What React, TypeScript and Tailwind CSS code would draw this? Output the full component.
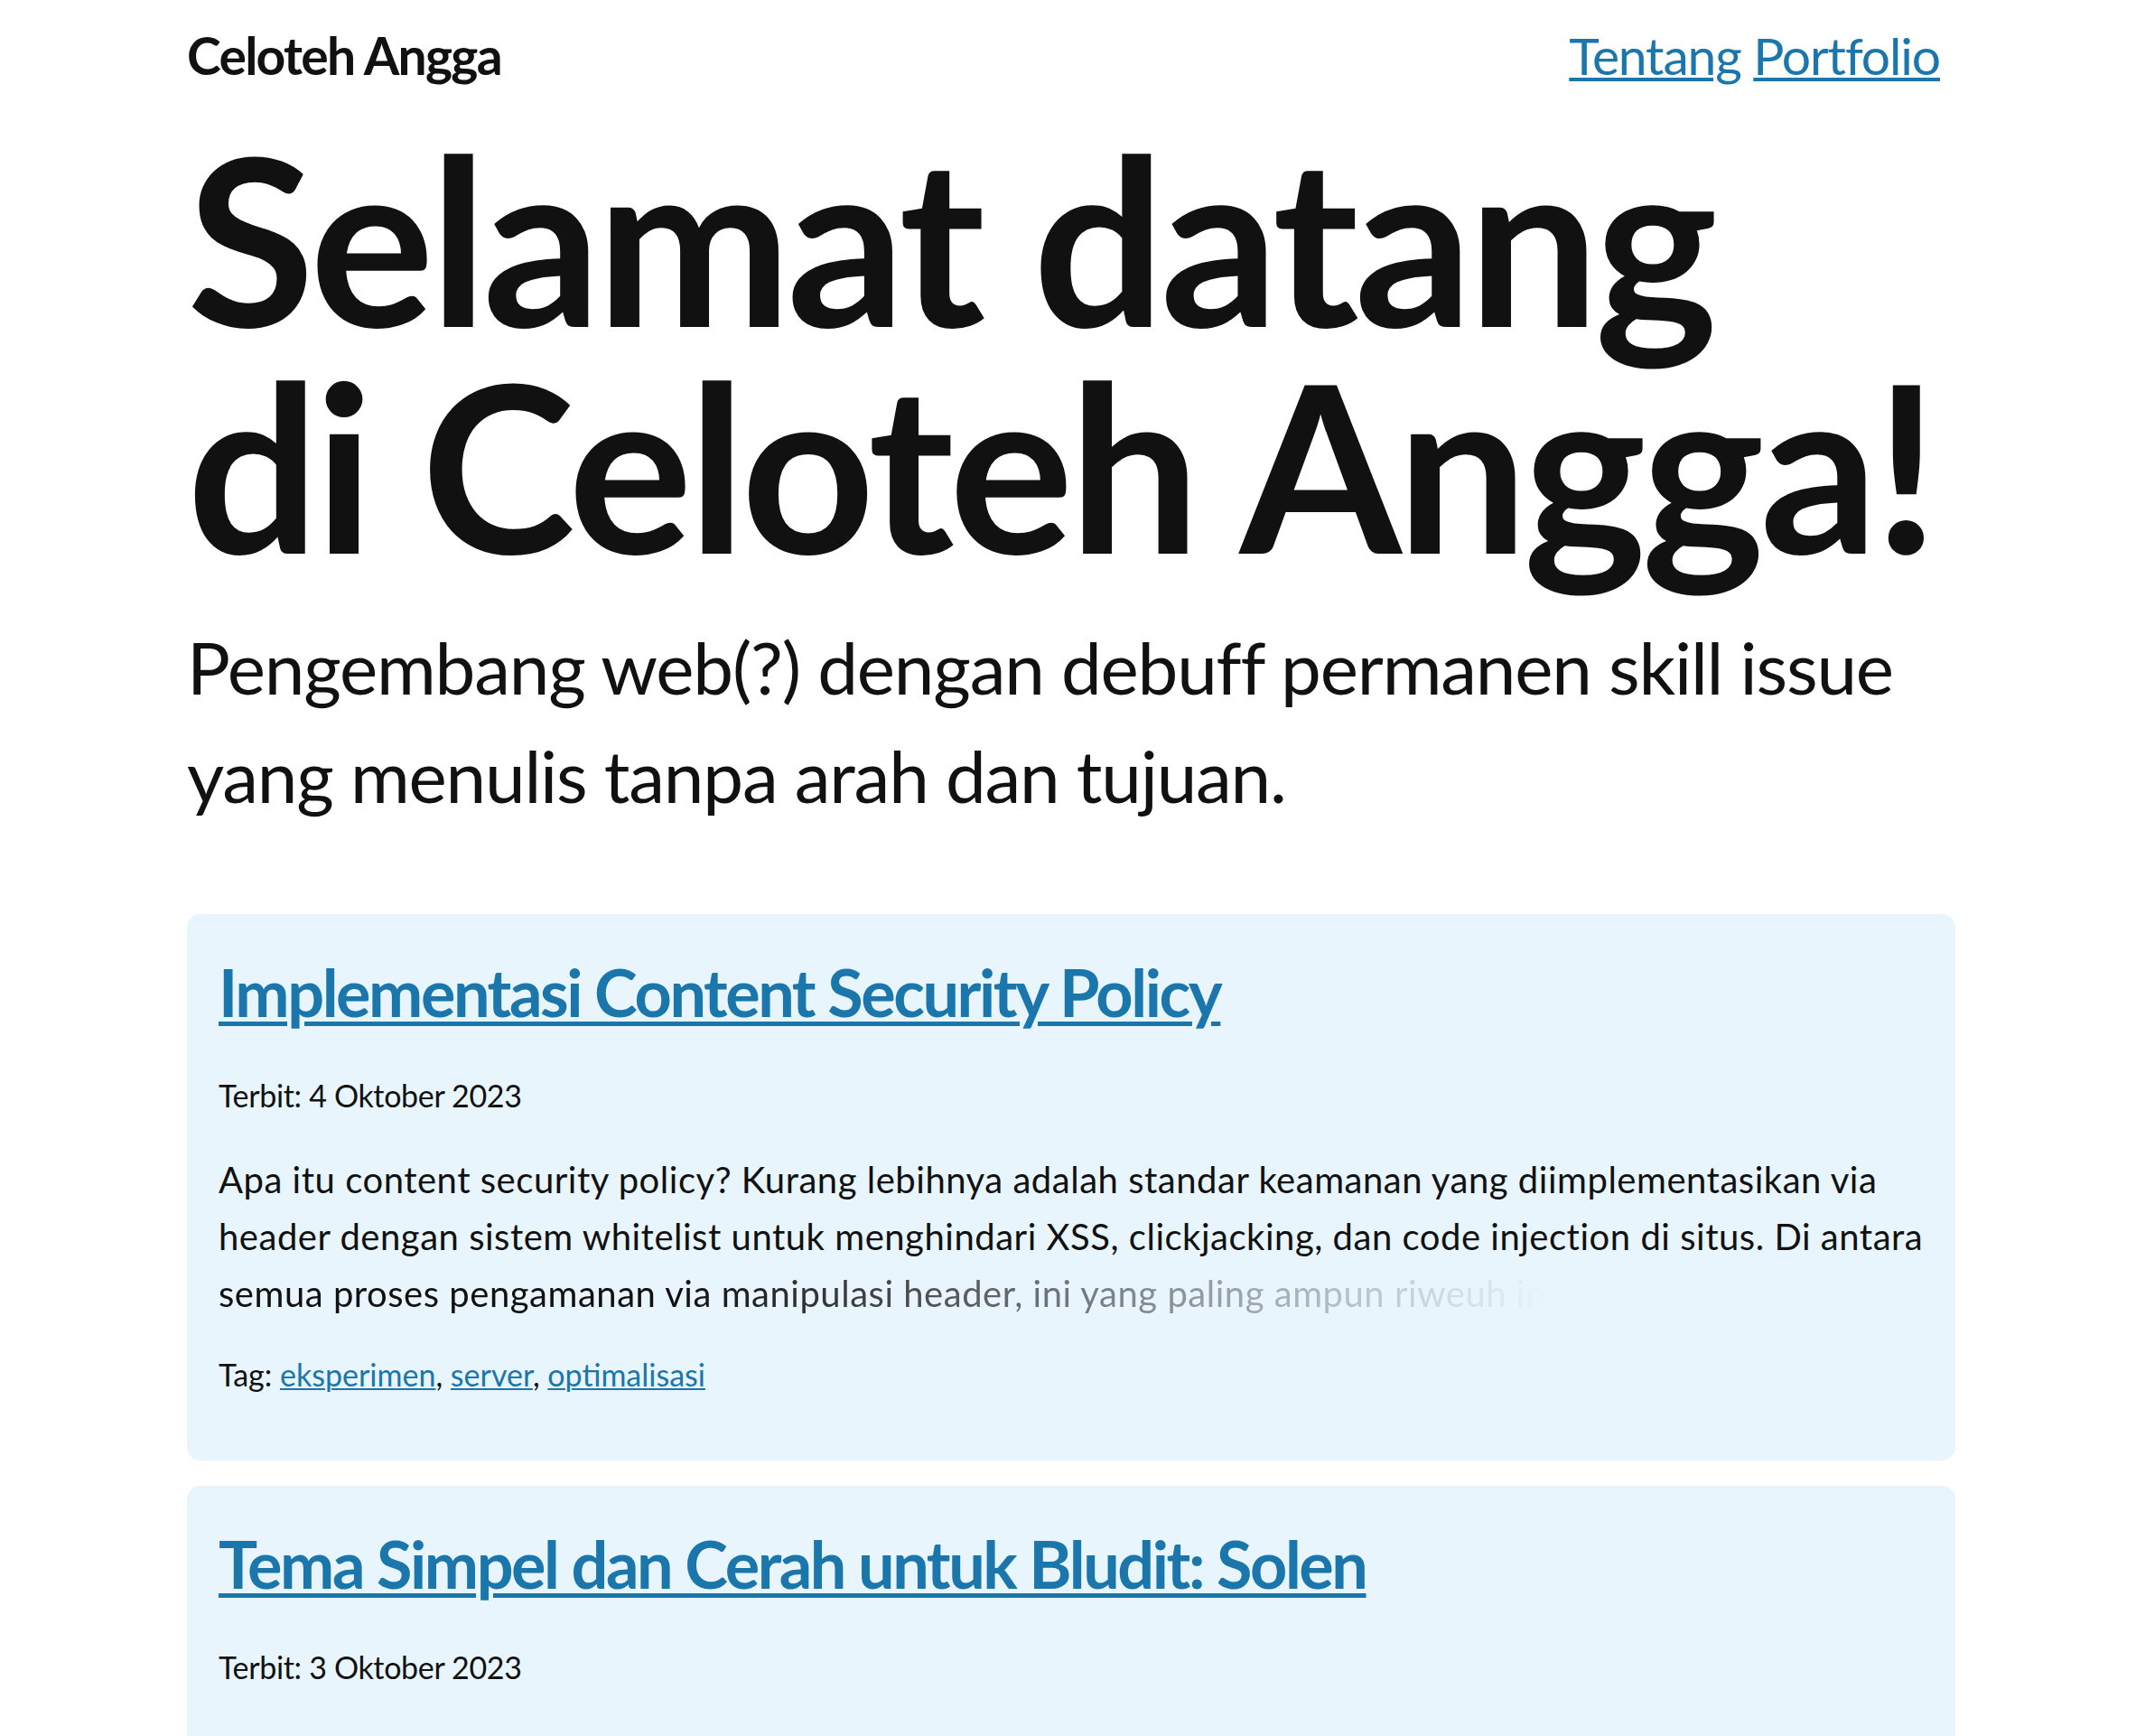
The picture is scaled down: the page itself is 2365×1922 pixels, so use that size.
const link = 'text-[#1a76ab]';

type Post = {
  title: string;
  date: string;
  body: string;
  fade: string;
  tags: string[];
};

const posts: Post[] = [
  {
    title: 'Implementasi Content Security Policy',
    date: '4 Oktober 2023',
    body:
      'Apa itu content security policy? Kurang lebihnya adalah standar keamanan yang diimplementasikan via header dengan sistem whitelist untuk menghindari XSS, clickjacking, dan code injection di situs. Di antara',
    fade: 'semua proses pengamanan via manipulasi header, ini yang paling ampun riweuh in',
    tags: ['eksperimen', 'server', 'optimalisasi'],
  },
  {
    title: 'Tema Simpel dan Cerah untuk Bludit: Solen',
    date: '3 Oktober 2023',
    body:
      'Solen adalah tema sederhana untuk Bludit yang saya buat untuk blog ini sendiri. Tampilannya cerah, ringan, dan tanpa banyak hiasan, cukup untuk',
    fade: 'menulis dan membaca tanpa gangguan apa pun di halaman yang terlalu ramai dan',
    tags: ['bludit', 'tema'],
  },
];

function PostCard({ post }: { post: Post }) {
  return (
    <article className="rounded-[15px] bg-[#e8f5fd] pl-[35px] pr-[20px] pt-[41px] pb-[70px]">
      <h2 className="text-[72px] font-bold leading-[90px] tracking-[-0.034em]">
        <a href="#" className={`${link} underline decoration-[5px] underline-offset-[5px]`}>
          {post.title}
        </a>
      </h2>
      <p className="mt-[44px] text-[34px] leading-[51px] tracking-[-0.01em]">Terbit: {post.date}</p>
      <p className="mt-[37px] text-[40px] leading-[63px] tracking-[0.013em]">
        {post.body}
        <span className="block w-fit bg-[linear-gradient(to_right,#111_35%,transparent_100%)] bg-clip-text text-transparent">
          {post.fade}
        </span>
      </p>
      <p className="mt-[32px] text-[34px] leading-[51px]">
        Tag:{' '}
        {post.tags.map((tag, i) => (
          <span key={tag}>
            <a href="#" className={`${link} underline decoration-2 underline-offset-[2px]`}>
              {tag}
            </a>
            {i < post.tags.length - 1 ? ', ' : ''}
          </span>
        ))}
      </p>
    </article>
  );
}

export default function App() {
  return (
    <div className="min-h-screen bg-white font-['Lato',sans-serif] text-[#111]">
      <div className="ml-[207px] w-[1958px]">
        <header className="flex items-center justify-between pt-[27px] pr-[17px]">
          <a href="#" className="text-[57px] font-bold leading-[68px] tracking-[-0.03em]">
            Celoteh Angga
          </a>
          <nav className="text-[57px] leading-[68px] tracking-[-0.02em]">
            <a href="#" className={`${link} underline decoration-[4px] underline-offset-[3px]`}>
              Tentang
            </a>{' '}
            <a href="#" className={`${link} underline decoration-[4px] underline-offset-[3px]`}>
              Portfolio
            </a>
          </nav>
        </header>

        <section className="mt-[42px]">
          <h1 className="text-[258px] font-bold leading-[251px] tracking-[-0.02em]">
            Selamat datang
            <br />
            di Celoteh Angga!
          </h1>
          <p className="mt-[39px] text-[80px] leading-[120px] tracking-[-0.015em]">
            Pengembang web(?) dengan debuff permanen skill issue yang menulis tanpa arah dan tujuan.
          </p>
        </section>

        <main className="mt-[94px] flex flex-col gap-[28px] pb-[60px]">
          {posts.map((post) => (
            <PostCard key={post.title} post={post} />
          ))}
        </main>
      </div>
    </div>
  );
}
